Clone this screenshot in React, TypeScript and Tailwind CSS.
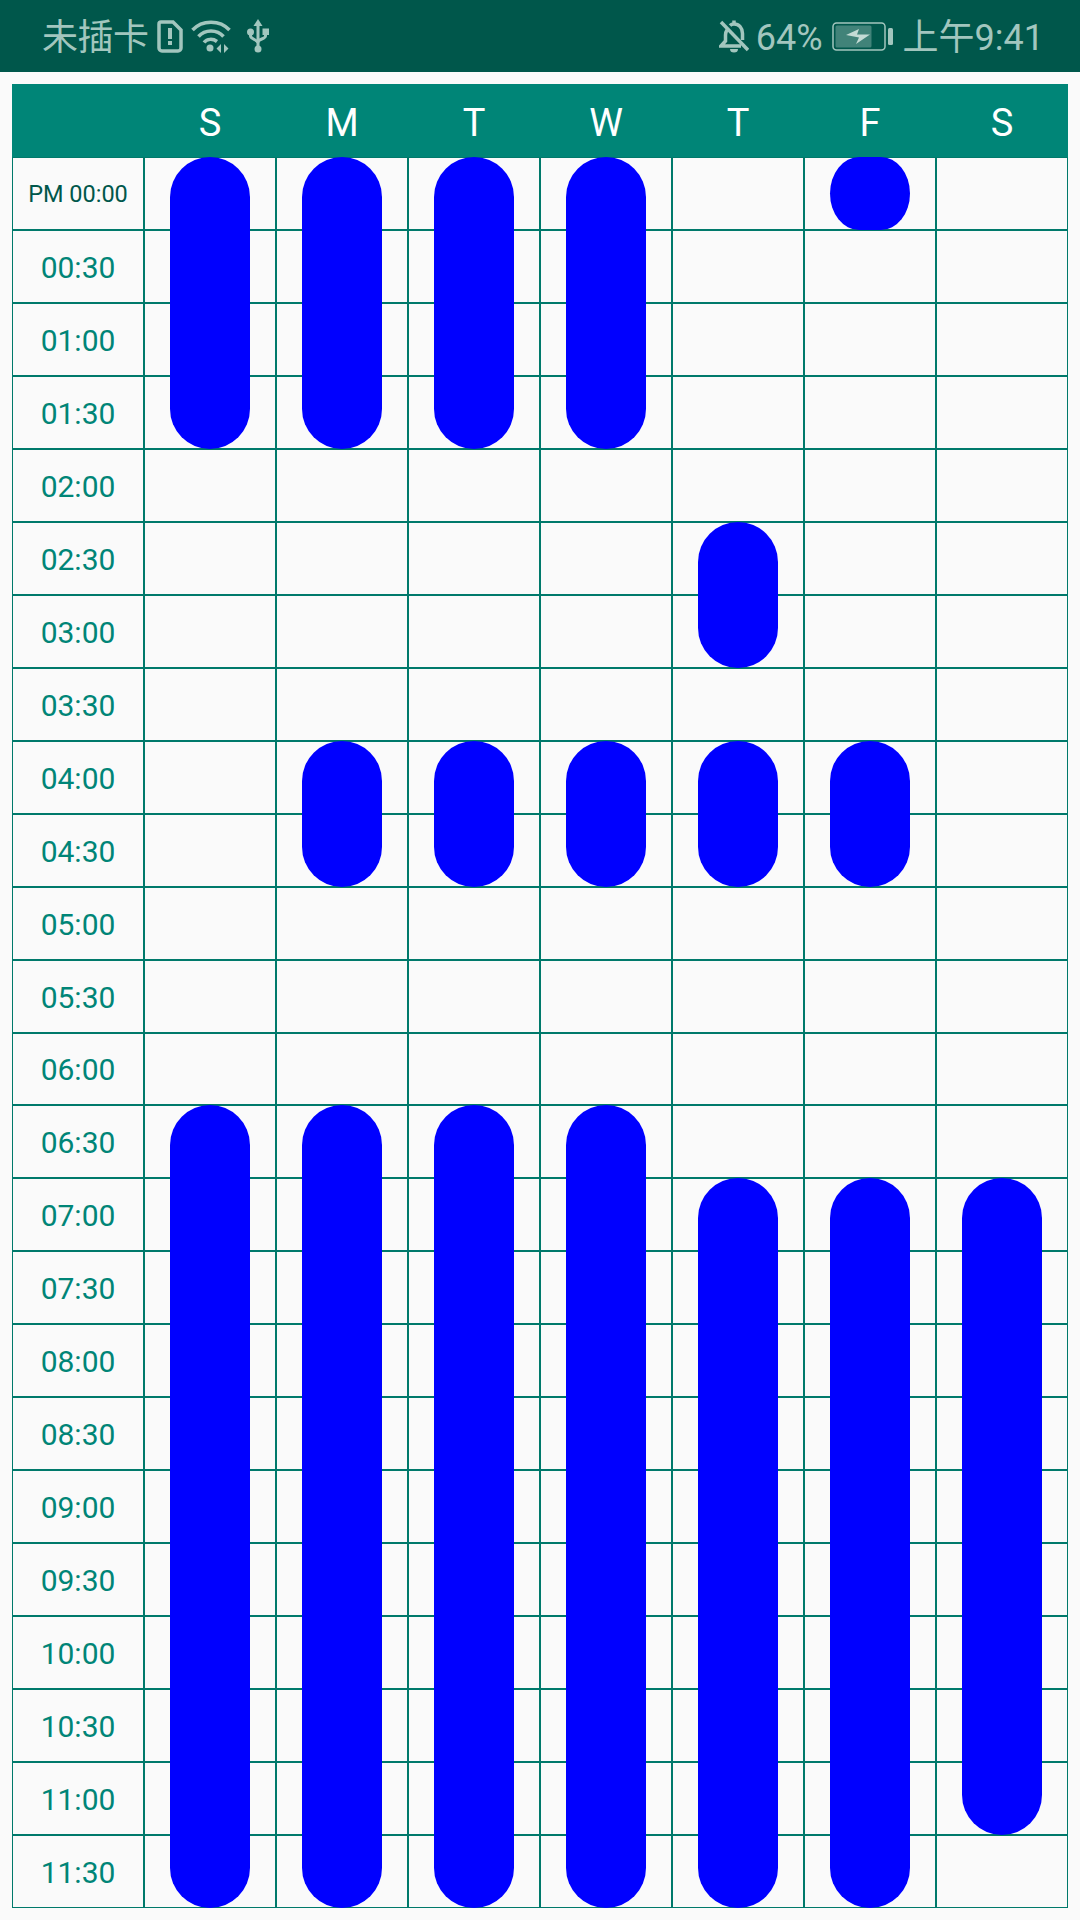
const DAYS = ["S", "M", "T", "W", "T", "F", "S"];

const TIMES = [
  "PM 00:00", "00:30", "01:00", "01:30", "02:00", "02:30", "03:00", "03:30",
  "04:00", "04:30", "05:00", "05:30", "06:00", "06:30", "07:00", "07:30",
  "08:00", "08:30", "09:00", "09:30", "10:00", "10:30", "11:00", "11:30",
];

// [day, first slot, slots]
const BARS = [
  [0, 0, 4], [0, 13, 11],
  [1, 0, 4], [1, 8, 2], [1, 13, 11],
  [2, 0, 4], [2, 8, 2], [2, 13, 11],
  [3, 0, 4], [3, 8, 2], [3, 13, 11],
  [4, 5, 2], [4, 8, 2], [4, 14, 10],
  [5, 0, 1], [5, 8, 2], [5, 14, 10],
  [6, 14, 9],
];

function StatusBar() {
  return (
    <div className="h-[72px] bg-[#00574b] flex items-center justify-between pl-[42px] pr-[36px] text-[#a2c6be] text-[36px] font-['Roboto','Noto_Sans_CJK_SC',sans-serif]">
      <div className="flex items-center">
        <span className="mt-[3px] leading-none tracking-[-0.5px]">未插卡</span>
        <svg className="ml-[8px]" width="26" height="33" viewBox="0 0 26 33" fill="none">
          <path d="M4 2H16L24 10V28a3 3 0 0 1-3 3H5a3 3 0 0 1-3-3V4a2 2 0 0 1 2-2Z" stroke="currentColor" strokeWidth="3.500" />
          <rect x="11" y="8" width="4" height="11" fill="currentColor" />
          <rect x="11" y="21" width="4" height="4" fill="currentColor" />
        </svg>
        <svg className="ml-[8px]" width="40" height="33" viewBox="0 0 40 33" fill="none" stroke="currentColor" strokeWidth="3.500">
          <path d="M1.500 10C11 -0.500 29 -0.500 38.500 10" />
          <path d="M7.500 16.500C14 9 26 9 32.500 16.500" />
          <path d="M13 22.500C16 18.500 22 18.500 26 21.500" />
          <circle cx="19" cy="28" r="3.500" fill="currentColor" stroke="none" />
          <path d="M30 24v9l-4.500-4.500Z M33 24v9l4.500-4.500Z" fill="currentColor" stroke="none" />
        </svg>
        <svg className="ml-[16px]" width="22" height="34" viewBox="0 0 22 34" fill="none" stroke="currentColor" strokeWidth="3">
          <path d="M11 6V29" />
          <path d="M11 0l4.500 7h-9Z" fill="currentColor" stroke="none" />
          <circle cx="11" cy="30" r="3.500" fill="currentColor" stroke="none" />
          <circle cx="3.500" cy="13" r="3.500" fill="currentColor" stroke="none" />
          <rect x="15.500" y="9.500" width="6.500" height="6.500" fill="currentColor" stroke="none" />
          <path d="M3.500 14v3c0 3 7.500 4 7.500 7" />
          <path d="M18.500 14v3c0 3-7.500 3-7.500 6" />
        </svg>
      </div>
      <div className="flex items-center">
        <svg width="30" height="33" viewBox="0 0 30 33" fill="none" stroke="currentColor" strokeWidth="3.500">
          <path d="M2 2L29 30" />
          <path d="M8 10C7 11.500 6.500 13 6.500 15V21L2 26H22" />
          <path d="M11 5.500C12 4.500 13.500 4 15 4c5 0 8.500 4 8.500 9.500V20" />
          <path d="M15 0.500v3" />
          <path d="M11 29a4 3.500 0 0 0 8 0Z" fill="currentColor" stroke="none" />
        </svg>
        <span className="ml-[7px] mt-[3px] leading-none">64%</span>
        <svg className="ml-[9px]" width="61" height="29" viewBox="0 0 61 29" fill="none">
          <rect x="1" y="1" width="52" height="27" rx="3.500" stroke="currentColor" strokeWidth="1.500" />
          <rect x="3.500" y="3.500" width="36" height="22" rx="1.500" fill="currentColor" fillOpacity="0.4" />
          <path d="M14 13L27 7L25 12.500H38L24 22L27 15.500Z" fill="#c4dbd5" />
          <rect x="56" y="6" width="5" height="17" rx="1.500" fill="currentColor" />
        </svg>
        <span className="ml-[10px] mt-[3px] leading-none">上午9:41</span>
      </div>
    </div>
  );
}

function Timetable() {
  return (
    <div className="mx-[12px] mt-[12px] h-[1824px] grid grid-cols-[repeat(8,132px)] grid-rows-[73px_repeat(24,minmax(0,1fr))] font-['Roboto',sans-serif]">
      <div className="col-span-full row-start-1 col-start-1 bg-[#008577]" />
      {DAYS.map((day, i) => (
        <div
          key={i}
          className="row-start-1 flex items-center justify-center pt-[4px] text-white text-[38px] leading-none"
          style={{ gridColumn: i + 2 }}
        >
          {day}
        </div>
      ))}
      {TIMES.map((time, row) => (
        <div
          key={time}
          className={`col-start-1 flex items-center justify-center border border-[#00796b] ${
            row === 0 ? "pt-[2px] text-[23.5px] text-[#00574b]" : "pt-[2px] text-[30px] text-[#008577]"
          }`}
          style={{ gridRow: row + 2 }}
        >
          {time}
        </div>
      ))}
      {TIMES.map((_, row) =>
        DAYS.map((__, col) => (
          <div
            key={`${row}-${col}`}
            className="border border-[#00796b]"
            style={{ gridRow: row + 2, gridColumn: col + 2 }}
          />
        ))
      )}
      {BARS.map(([day, start, span]) => (
        <div
          key={`${day}-${start}`}
          // a single slot is shorter than the 80px circle: flat top and bottom, round sides
          className={`w-[80px] justify-self-center bg-[#0000ff] ${
            span === 1 ? "rounded-[29px/36.5px]" : "rounded-[40px]"
          }`}
          style={{ gridColumn: day + 2, gridRow: `${start + 2} / span ${span}` }}
        />
      ))}
    </div>
  );
}

export default function App() {
  return (
    <div className="w-[1080px] h-[1920px] bg-[#fafafa] overflow-hidden">
      <StatusBar />
      <Timetable />
    </div>
  );
}
